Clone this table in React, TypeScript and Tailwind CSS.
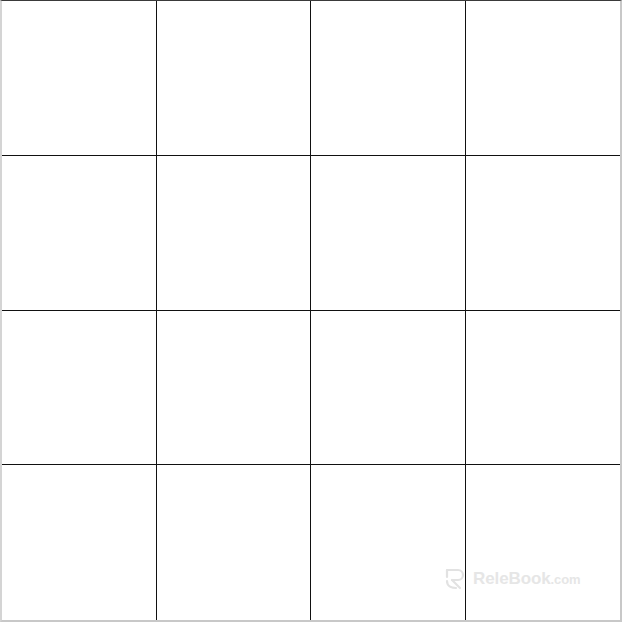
const cells = Array.from({ length: 16 }, (_, i) => i)

export default function App() {
  return (
    <div className="relative h-[622px] w-[622px] overflow-hidden bg-white">
      <div className="grid h-full w-full grid-cols-4 grid-rows-4 border-t border-t-[#3a3a3a] border-l-2 border-l-[#d4d4d4] border-r-2 border-r-[#c8c8c8] border-b-2 border-b-[#c8c8c8]">
        {cells.map((i) => (
          <div
            key={i}
            className={
              (i % 4 !== 3 ? "border-r-[1.5px] border-r-[#111] " : "") +
              (i < 12 ? "border-b-[1.5px] border-b-[#111]" : "")
            }
          />
        ))}
      </div>

      {/* watermark */}
      <div className="absolute left-[444px] top-[566px] flex items-center gap-[7px] text-[#e6e6e6]">
        <svg width="22" height="24" viewBox="0 0 22 24" fill="none" stroke="#e2e2e2" strokeWidth="2.2" strokeLinecap="round">
          <path d="M3 3 H14 a5 5 0 0 1 0 10 H8" />
          <path d="M3 3 V10" />
          <path d="M8 13 L16 21" />
          <path d="M3 14 c0 6 6 7 9 7" />
        </svg>
        <span className="font-['Liberation_Sans',sans-serif] text-[17px] font-bold tracking-[-0.1px]">
          ReleBook
          <span className="text-[13px] font-bold">.com</span>
        </span>
      </div>
    </div>
  )
}
